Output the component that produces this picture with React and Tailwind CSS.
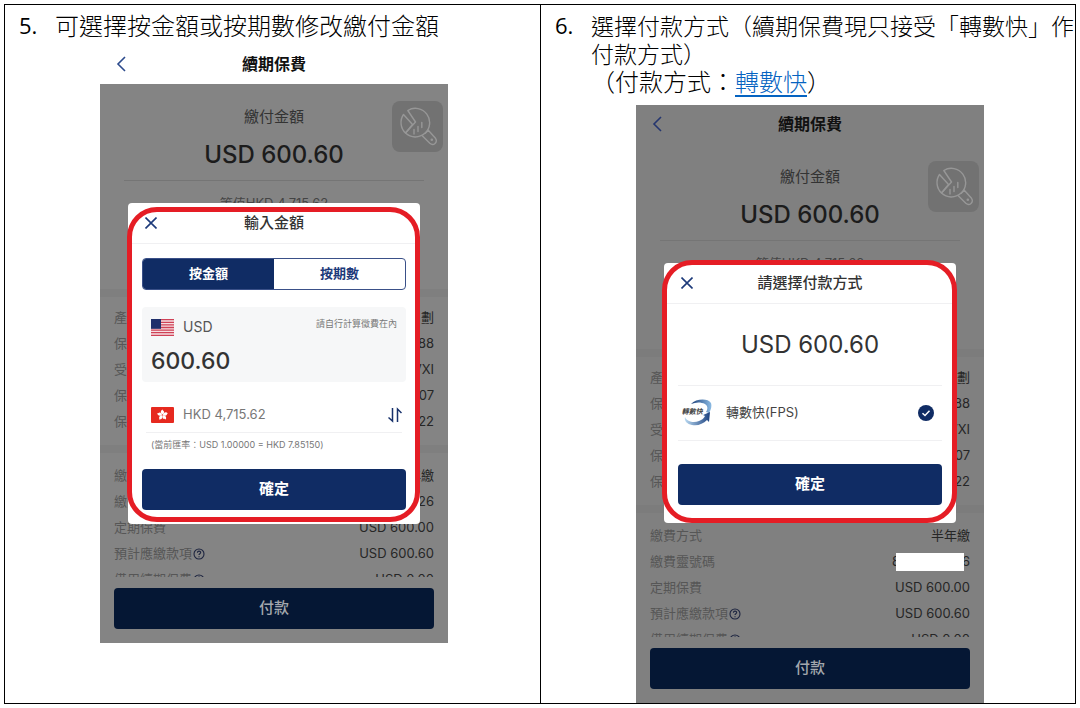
import { useState } from "react";
import clsx from "clsx";

const APP_FONT = "font-[Inter,'Noto_Sans_CJK_TC',sans-serif]";

const POLICY_ROWS = [
  { label: "產", value: "劃" },
  { label: "保", value: "88" },
  { label: "受", value: "VXI" },
  { label: "保", value: "07" },
  { label: "保", value: "22" }
];

function BackIcon() {
  return (
    <svg width="10" height="16" viewBox="0 0 10 16" fill="none" stroke="currentColor" strokeWidth="1.6">
      <path d="M9 1 2 8l7 7" />
    </svg>
  );
}

function CloseIcon() {
  return (
    <svg width="12" height="12" viewBox="0 0 12 12" fill="none" stroke="currentColor" strokeWidth="1.6">
      <path d="M.5.5l11 11M11.5.5l-11 11" />
    </svg>
  );
}

function HelpIcon() {
  return (
    <svg width="12" height="12" viewBox="0 0 12 12" fill="none" stroke="#1d2540" strokeWidth="1.1">
      <circle cx="6" cy="6" r="5" />
      <path d="M4.4 4.8c0-2.2 3.3-2.2 3.3-.2 0 1.2-1.7 1.2-1.7 2.5M6 8.2v1.1" />
    </svg>
  );
}

function SwapIcon() {
  return (
    <svg width="14" height="16" viewBox="0 0 14 16" fill="none" stroke="#17316b" strokeWidth="1.5">
      <path d="M4.500 1v13L.5 10.500M9.500 15V2l4 4" />
    </svg>
  );
}

function ToolIcon() {
  return (
    <svg width="40" height="40" viewBox="0 0 40 40" fill="none" stroke="#979797" strokeWidth="1.4" strokeLinejoin="round" strokeLinecap="round">
      <path d="M9.800 3.500A14.300 14.300 0 1 1 7.500 26L17.500 15z" />
      <path d="M5.500 7.500A14.300 14.300 0 0 0 7.500 26L14.500 17.500z" />
      <path d="M27.300 26.300l3-3 7.200 8c2.600 4-2 8-5.700 5l-7.300-7.300" />
      <path d="M16 22.500v4.500M20 19.500v5M23.800 15.500v5" />
      <circle cx="33.800" cy="32.800" r=".6" />
    </svg>
  );
}

function UsFlag() {
  return (
    <svg width="23" height="17" viewBox="0 0 23 17">
      <rect width="23" height="17" rx="1" fill="#f6dfe2" />
      <path d="M0 .7h23M0 3.300h23M0 5.900h23M0 8.500h23M0 11.100h23M0 13.700h23M0 16.300h23" stroke="#cf4257" strokeWidth="1.300" />
      <rect width="10" height="9.800" fill="#1f2f6b" />
    </svg>
  );
}

function HkFlag() {
  return (
    <svg width="23" height="16" viewBox="0 0 23 16">
      <rect width="23" height="16" rx="1" fill="#e6291f" />
      <g transform="translate(11.5 8)" fill="#fff">
        {[0, 72, 144, 216, 288].map((angle) => (
          <path key={angle} transform={`rotate(${angle})`} d="M0-.4C-2.200-1.800-2.300-4.600.2-5.600c-.4 1 1.800 1.200 1.400 3C1.400-1.700.8-1 0-.4z" />
        ))}
      </g>
    </svg>
  );
}

function FpsLogo() {
  return (
    <svg width="30" height="28" viewBox="0 0 30 28">
      <defs>
        <linearGradient id="fpsTop" x1="0" x2="1">
          <stop offset="0" stopColor="#1b3f7a" />
          <stop offset="1" stopColor="#8cbbe3" />
        </linearGradient>
        <linearGradient id="fpsBottom" x1="0" x2="1">
          <stop offset="0" stopColor="#b9d9f1" />
          <stop offset="1" stopColor="#1c4280" />
        </linearGradient>
      </defs>
      <path d="M9 5C14-.5 26-1 29 4c1 3 0 7-2 10l-3-1c2-3 2-6-1-8-4-2-9-2-14 0z" fill="url(#fpsTop)" />
      <path d="M3 18c2 5 9 6 14 4 3-1 5-3 6-5l-2-1 7-3-1 10-2-2c-4 4-9 6-15 5-5-1-8-4-7-8z" fill="url(#fpsBottom)" />
      <text x="3" y="15" fontSize="7" fontWeight="700" fill="#444" transform="skewX(-12)">轉數快</text>
    </svg>
  );
}

function Row({ label, value, help }) {
  return (
    <div className="flex h-[26px] items-center justify-between">
      <dt className="flex items-center gap-px text-[#565656]">
        {label}
        {help && <HelpIcon />}
      </dt>
      <dd className="flex items-center text-[#262626]">{value}</dd>
    </div>
  );
}

function Phone({ dimHeader, number, children }) {
  return (
    <div className={clsx("relative ml-[95px] w-full max-w-[348px] text-[13px]", APP_FONT, dimHeader ? "bg-[#808080]" : "bg-[#848484]")}>
      <header className={clsx("grid grid-cols-[1fr_auto_1fr] items-center px-4 pb-0.5", dimHeader ? "h-[39px]" : "h-[38px] bg-white")}>
        <button type="button" aria-label="返回" className={dimHeader ? "text-[#25366f]" : "text-[#2c4a8c]"}>
          <BackIcon />
        </button>
        <h2 className="text-base font-bold text-[#111]">續期保費</h2>
      </header>

      <div className="relative">
        <button type="button" aria-label="工具" className="absolute top-[17px] right-[5px] flex size-[51px] items-center justify-center rounded-lg bg-[#727272]">
          <ToolIcon />
        </button>
        <div className="px-6 pt-[22px] pb-16 text-center">
          <p className="text-[15px] leading-[22px] text-[#333]">繳付金額</p>
          <p className="mt-[9px] text-2xl leading-9 font-medium text-[#1c1c1c]">USD 600.60</p>
          <p className="mt-[7px] border-t border-[#757575] leading-[44px] text-[#444]">等值HKD 4,715.62</p>
        </div>
        <dl className="border-t-8 border-black/3 px-3.5 pt-2 pb-2.5">
          {POLICY_ROWS.map((row, i) => (
            <Row key={i} {...row} />
          ))}
        </dl>
        <dl className="border-t-8 border-black/3 px-3.5 pt-2.5">
          <Row label="繳費方式" value="半年繳" />
          <Row label="繳費靈號碼" value={number} />
          <Row label="定期保費" value="USD 600.00" />
          <Row label="預計應繳款項" value="USD 600.60" help />
          <div className="h-2.5 overflow-hidden">
            <Row label="備用續期保費" value="USD 0.00" help />
          </div>
        </dl>
      </div>

      <footer className="px-3.5 pt-[11px] pb-3.5">
        <button type="button" className="h-[41px] w-full rounded bg-[#051734] text-[15px] font-medium text-[#a3a7ad]">付款</button>
      </footer>

      {children}
    </div>
  );
}

function Modal({ title, className, ringClassName, children }) {
  return (
    <div role="dialog" aria-label={title} className={clsx("absolute inset-x-7 rounded-sm bg-white", className)}>
      <div className="grid h-[41px] grid-cols-[1fr_auto_1fr] items-center border-b border-[#f0f0f2] px-[17px]">
        <button type="button" aria-label="關閉" className="text-[#1d3a7a]">
          <CloseIcon />
        </button>
        <h3 className="text-[15px] font-medium text-[#333]">{title}</h3>
      </div>
      <div className="px-3.5">
        {children}
        <button type="button" className="h-[41px] w-full rounded bg-[#102c64] text-[15px] font-bold text-white">確定</button>
      </div>
      <div className={clsx("pointer-events-none absolute rounded-[30px] border-[5px] border-[#e51d25]", ringClassName)} />
    </div>
  );
}

function AmountModal() {
  const [mode, setMode] = useState("amount");
  const [amount, setAmount] = useState("600.60");

  const tabClass = (active) =>
    clsx("flex-1 text-[13px] font-bold", active ? "bg-[#102c64] text-white" : "text-[#1d3a7a]");

  return (
    <Modal title="輸入金額" className="top-[157px] pb-3.5" ringClassName="-left-px right-0 top-1 bottom-0.5">
      <div className="mt-3.5 flex h-8 overflow-hidden rounded border border-[#3a5088]">
        <button type="button" className={tabClass(mode === "amount")} onClick={() => setMode("amount")}>按金額</button>
        <button type="button" className={tabClass(mode === "period")} onClick={() => setMode("period")}>按期數</button>
      </div>

      <div className="mt-[17px] rounded-sm bg-[#f6f7f8] px-[9px] pt-2.5 pb-[3px]">
        <div className="flex h-5 items-center gap-[9px]">
          <UsFlag />
          <label htmlFor="amount" className="text-sm text-[#555]">USD</label>
          <span className="mb-1.5 ml-auto text-[9px] text-[#777]">請自行計算徵費在內</span>
        </div>
        <input
          id="amount"
          className="mt-1.5 block h-9 w-full bg-transparent text-[23px] font-medium text-[#333] outline-none"
          value={amount}
          onChange={(e) => setAmount(e.target.value)}
        />
      </div>

      <div className="mx-1 mt-[15px] flex h-9 items-center gap-[9px] border-b border-[#f0f0f2] pl-[5px]">
        <HkFlag />
        <span className="text-[13px] text-[#777]">HKD 4,715.62</span>
        <button type="button" aria-label="轉換貨幣" className="ml-auto">
          <SwapIcon />
        </button>
      </div>
      <p className="mb-3 px-[9px] text-[9px] leading-6 text-[#777]">(當前匯率：USD 1.00000 = HKD 7.85150)</p>
    </Modal>
  );
}

function PaymentModal() {
  return (
    <Modal title="請選擇付款方式" className="top-[158px] pb-[18px]" ringClassName="-left-0.5 -right-px -top-[3px] bottom-0">
      <p className="text-center text-2xl leading-[81px] text-[#333]">USD 600.60</p>
      <label className="mb-[23px] flex h-14 items-center border-y border-[#f0f0f2] pr-2 pl-1">
        <FpsLogo />
        <span className="ml-3.5 text-[13px] text-[#444]">轉數快(FPS)</span>
        <input type="radio" name="method" defaultChecked className="sr-only" />
        <svg className="ml-auto" width="16" height="16" viewBox="0 0 16 16" fill="none">
          <circle cx="8" cy="8" r="8" fill="#102c64" />
          <path d="M4.500 8.200l2.500 2.300 4.500-4.700" stroke="#fff" strokeWidth="1.500" />
        </svg>
      </label>
    </Modal>
  );
}

function Step({ number, children }) {
  return (
    <div className="flex pl-3.5 leading-7 text-black">
      <span className="w-9 shrink-0 font-['Open_Sans',sans-serif] text-[22px] leading-7 font-normal">{number}.</span>
      <div className="font-['Noto_Sans_CJK_TC',sans-serif] font-light whitespace-nowrap">{children}</div>
    </div>
  );
}

export default function App() {
  return (
    <main lang="zh-Hant" className="flex min-h-screen bg-white p-1">
      <div className="grid flex-1 grid-cols-2 border border-black">
        <section className="pt-1.5">
          <Step number={5}>
            <p className="text-2xl leading-7">可選擇按金額或按期數修改繳付金額</p>
          </Step>
          <div className="mt-[7px]">
            <Phone number="26">
              <AmountModal />
            </Phone>
          </div>
        </section>

        <section className="border-l border-black pt-1.5">
          <Step number={6}>
            <p className="text-[23px] leading-7">
              選擇付款方式（續期保費現只接受「轉數快」作
              <br />
              付款方式）
            </p>
            <p className="text-2xl leading-7">
              （付款方式：
              <a href="#fps" className="text-[#0563c1] underline underline-offset-4">轉數快</a>
              ）
            </p>
          </Step>
          <div className="mt-2.5">
            <Phone
              dimHeader
              number={
                <>
                  8<span className="relative -mr-0.5 -ml-1 h-[18px] w-[68px] bg-white" />6
                </>
              }
            >
              <PaymentModal />
            </Phone>
          </div>
        </section>
      </div>
    </main>
  );
}
